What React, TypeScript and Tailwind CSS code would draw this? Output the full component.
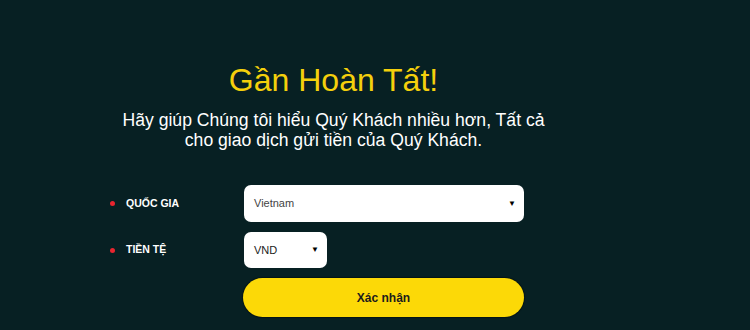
export default function App() {
  return (
    <div className="min-h-[330px] w-[750px] bg-[#072023] font-['Liberation_Sans',Arial,sans-serif] text-white">
      <div className="flex w-[667px] flex-col items-center pt-[60px]">
        <h1 className="text-[32px] leading-[40px] text-[#f4d00c]">Gần Hoàn Tất!</h1>
        <p className="mt-[10px] text-center text-[17.6px] leading-[20px]">
          Hãy giúp Chúng tôi hiểu Quý Khách nhiều hơn, Tất cả
          <br />
          cho giao dịch gửi tiền của Quý Khách.
        </p>
      </div>

      <div className="mt-[35px] flex flex-col gap-[10px] pl-[110px]">
        <div className="flex items-center">
          <div className="flex w-[134px] items-center gap-[11px]">
            <span className="h-[5px] w-[5px] rounded-full bg-[#e8252f]" />
            <span className="text-[10.5px] font-bold">QUỐC GIA</span>
          </div>
          <div className="flex h-[37px] w-[280px] items-center justify-between rounded-[7px] bg-white pl-[10px] pr-[8px] text-[11px] text-[#444]">
            <span>Vietnam</span>
            <span className="text-[8px] text-black">▼</span>
          </div>
        </div>

        <div className="flex items-center">
          <div className="flex w-[134px] items-center gap-[11px]">
            <span className="h-[5px] w-[5px] rounded-full bg-[#e8252f]" />
            <span className="text-[10.5px] font-bold">TIỀN TỆ</span>
          </div>
          <div className="flex h-[36px] w-[83px] items-center justify-between rounded-[7px] bg-white pl-[10px] pr-[8px] text-[11px] text-[#222]">
            <span>VND</span>
            <span className="text-[8px] text-black">▼</span>
          </div>
        </div>

        <div className="flex pl-[133px]">
          <button className="h-[39px] w-[281px] rounded-full bg-[#fcd907] text-[12px] font-bold text-[#1c1c1c] shadow-[0_0_1px_1px_rgba(0,0,0,0.4)]">
            Xác nhận
          </button>
        </div>
      </div>
    </div>
  );
}
